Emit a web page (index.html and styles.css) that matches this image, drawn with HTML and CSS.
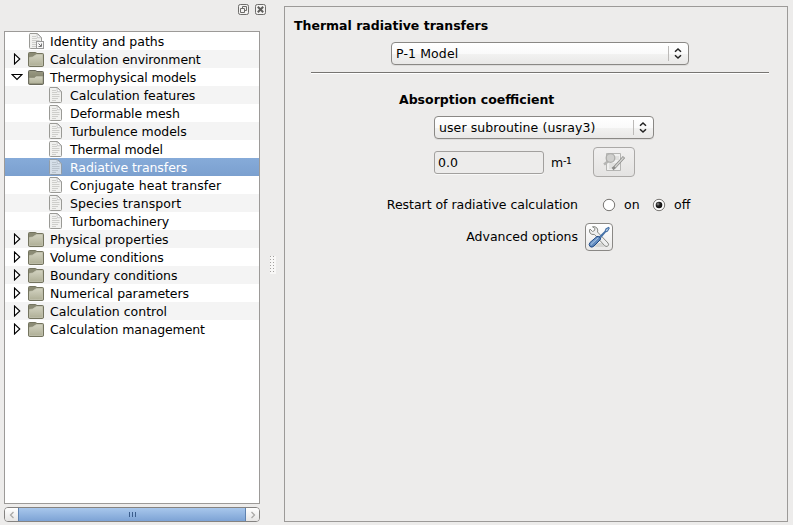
FILE: index.html
```html
<!DOCTYPE html>
<html lang="en">
<head>
<meta charset="utf-8">
<title>Thermal radiative transfers</title>
<link rel="stylesheet" href="styles.css">
</head>
<body>
<svg class="defs" width="0" height="0">
  <defs>
    <linearGradient id="gFolder" x1="0" y1="0" x2="0" y2="1"><stop offset="0" stop-color="#d2d2c0"/><stop offset="1" stop-color="#b0b098"/></linearGradient>
    <linearGradient id="gDark" x1="0" y1="0" x2="0" y2="1"><stop offset="0" stop-color="#9a9a83"/><stop offset="1" stop-color="#75755f"/></linearGradient>
    <linearGradient id="gBlue" x1="0" y1="0" x2="1" y2="1"><stop offset="0" stop-color="#9dbce0"/><stop offset="1" stop-color="#3465a4"/></linearGradient>
    <radialGradient id="gDot" cx=".35" cy=".35" r=".6"><stop offset="0" stop-color="#999"/><stop offset=".5" stop-color="#222"/><stop offset="1" stop-color="#111"/></radialGradient>
    <symbol id="folder" viewBox="0 0 16 16">
      <path d="M.5 14V2.500Q.5 1.500 1.500 1.500H7.500Q8.500 1.500 8.500 2.500H14.500Q15.500 2.500 15.500 3.500V14Q15.500 15.500 14.500 15.500H1.500Q.5 15.500.5 14Z" fill="#8b8b75" stroke="#74745f"/>
      <path d="M1.500 6.500Q5 6.500 7 4.500Q7.500 3.500 9 3.500H14.500V14.500H1.500Z" fill="url(#gFolder)" stroke="#c9c9b6" stroke-width=".7"/>
    </symbol>
    <symbol id="folderopen" viewBox="0 0 16 16">
      <path d="M.5 14V2.500Q.5 1.500 1.500 1.500H7.500Q8.500 1.500 8.500 2.500H14.500Q15.500 2.500 15.500 3.500V14Q15.500 15.500 14.500 15.500H1.500Q.5 15.500.5 14Z" fill="url(#gDark)" stroke="#66665a"/>
      <path d="M1 8.500H6.500L8 7H15V14.800H1Z" fill="url(#gFolder)" stroke="#85856f" stroke-width=".6"/>
    </symbol>
    <symbol id="doc" viewBox="0 0 16 16">
      <path d="M2 .5H9.500L13.500 4.500V14.500Q13.500 15.500 12.500 15.500H2.500Q1.500 15.500 1.500 14.500V1.500Q1.500.5 2.500.5Z" fill="#f1f1ef" stroke="#9a9a96"/>
      <path d="M9 1L9.300 4.700H13.200Z" fill="#fff" stroke="#aaa" stroke-width=".6"/>
      <path d="M4 3.500H8M4 5.500H9M4 7.500H11.500M4 9.500H11.500M4 11.500H10M4 13.500H8" stroke="#cececb"/>
    </symbol>
    <symbol id="link" viewBox="0 0 16 16">
      <use href="#doc" width="16" height="16"/>
      <rect x="8.500" y="8.500" width="7" height="7" fill="#f7f7f7" stroke="#999"/>
      <path d="M10.500 10.500L13 13M13.500 10.500V13.500H10.500" stroke="#777" fill="none"/>
    </symbol>
    <symbol id="updown" viewBox="0 0 8 12"><path d="M1 4.300L4 1.500L7 4.300M1 7.700L4 10.500L7 7.700" fill="none" stroke="#222" stroke-width="1.500"/></symbol>
    <symbol id="closed" viewBox="0 0 10 12"><path d="M2.500 1V11L7.800 6Z" fill="#fff" stroke="#000" stroke-width="1.100"/></symbol>
    <symbol id="opened" viewBox="0 0 12 12"><path d="M1 3.500H11L6 8.500Z" fill="#fff" stroke="#000" stroke-width="1.100"/></symbol>
  </defs>
</svg>
<div class="window">
  <aside class="dock">
    <div class="dockbar">
      <svg width="11" height="11"><rect x=".5" y=".5" width="10" height="10" rx="1.800" fill="#f3f2f1" stroke="#6e6d6b"/><path d="M4.500 4V2.500H8.500V6.500H7M2.500 4.500H6.500V8.500H2.500Z" fill="none" stroke="#6e6d6b"/></svg>
      <svg width="11" height="11"><rect x=".5" y=".5" width="10" height="10" rx="1.800" fill="#f3f2f1" stroke="#6e6d6b"/><path d="M2.800 2.800L8.200 8.200M8.200 2.800L2.800 8.200" stroke="#5e5d5b" stroke-width="2"/></svg>
    </div>
    <ul class="tree">
      <li><svg class="arrow"></svg><svg class="icon"><use href="#link"/></svg><span>Identity and paths</span></li>
      <li><svg class="arrow"><use href="#closed" width="10" height="12"/></svg><svg class="icon"><use href="#folder"/></svg><span class="tight">Calculation environment</span></li>
      <li class="expanded"><svg class="arrow"><use href="#opened" width="12" height="12"/></svg><svg class="icon"><use href="#folderopen"/></svg><span class="tight">Thermophysical models</span></li>
      <li class="child"><svg class="icon"><use href="#doc"/></svg><span>Calculation features</span></li>
      <li class="child"><svg class="icon"><use href="#doc"/></svg><span class="tight">Deformable mesh</span></li>
      <li class="child"><svg class="icon"><use href="#doc"/></svg><span class="snug">Turbulence models</span></li>
      <li class="child"><svg class="icon"><use href="#doc"/></svg><span class="tight">Thermal model</span></li>
      <li class="child selected"><svg class="icon"><use href="#doc"/></svg><span class="snug">Radiative transfers</span></li>
      <li class="child"><svg class="icon"><use href="#doc"/></svg><span class="loose">Conjugate heat transfer</span></li>
      <li class="child"><svg class="icon"><use href="#doc"/></svg><span class="loose">Species transport</span></li>
      <li class="child"><svg class="icon"><use href="#doc"/></svg><span class="tight">Turbomachinery</span></li>
      <li><svg class="arrow"><use href="#closed" width="10" height="12"/></svg><svg class="icon"><use href="#folder"/></svg><span>Physical properties</span></li>
      <li><svg class="arrow"><use href="#closed" width="10" height="12"/></svg><svg class="icon"><use href="#folder"/></svg><span class="snug">Volume conditions</span></li>
      <li><svg class="arrow"><use href="#closed" width="10" height="12"/></svg><svg class="icon"><use href="#folder"/></svg><span class="snug">Boundary conditions</span></li>
      <li><svg class="arrow"><use href="#closed" width="10" height="12"/></svg><svg class="icon"><use href="#folder"/></svg><span class="snug">Numerical parameters</span></li>
      <li><svg class="arrow"><use href="#closed" width="10" height="12"/></svg><svg class="icon"><use href="#folder"/></svg><span>Calculation control</span></li>
      <li><svg class="arrow"><use href="#closed" width="10" height="12"/></svg><svg class="icon"><use href="#folder"/></svg><span class="tight">Calculation management</span></li>
    </ul>
    <div class="scrollbar">
      <div class="step"><svg width="6" height="8"><path d="M4.500 1L1.500 4L4.500 7" fill="none" stroke="#aaa9a7" stroke-width="1.300"/></svg></div>
      <div class="thumb"><i></i><i></i><i></i></div>
      <div class="step"><svg width="6" height="8"><path d="M1.500 1L4.500 4L1.500 7" fill="none" stroke="#aaa9a7" stroke-width="1.300"/></svg></div>
    </div>
  </aside>
  <div class="splitter"><div class="grip"></div></div>
  <main class="panel">
    <h1>Thermal radiative transfers</h1>
    <div class="combo model"><span>P-1 Model</span><svg class="ud"><use href="#updown"/></svg></div>
    <hr>
    <h2>Absorption coefficient</h2>
    <div class="combo coef"><span>user subroutine (usray3)</span><svg class="ud"><use href="#updown"/></svg></div>
    <div class="row value">
      <div class="field">0.0</div>
      <span class="unit">m<span class="sup">-1</span></span>
      <div class="btn wide">
        <svg width="24" height="20" viewBox="0 0 24 20">
          <path d="M4.500 1.500H18.500V18.500H4.500Z" fill="#f0f0ef" stroke="#b5b5b3"/>
          <path d="M7 12H15M7 14H15M7 16H12M13 5H17M13 7H17" stroke="#d2d2d0"/>
          <path d="M6.500 9L2 12.500" stroke="#b5b5b3" stroke-width="2.500"/>
          <circle cx="8.500" cy="6" r="4.300" fill="#cfcfcd" stroke="#adadab" stroke-width="1.300"/>
          <path d="M22 5L12.500 15.500L10.500 17" fill="none" stroke="#8c8c8a" stroke-width="3"/><path d="M21.500 5.500L13 15" stroke="#d4d4d2" stroke-width="1.400"/>
        </svg>
      </div>
    </div>
    <div class="row restart">
      <span class="label">Restart of radiative calculation</span>
      <svg class="radio" width="14" height="14"><circle cx="7" cy="7" r="5.700" fill="#fff" stroke="#777572"/></svg><span class="on">on</span>
      <svg class="radio" width="14" height="14"><circle cx="7" cy="7" r="5.700" fill="#fff" stroke="#777572"/><circle cx="7" cy="7" r="3.300" fill="url(#gDot)"/></svg><span>off</span>
    </div>
    <div class="row advanced">
      <span class="label">Advanced options</span>
      <div class="btn small">
        <svg width="22" height="22" viewBox="0 0 22 22">
          <ellipse cx="12" cy="19" rx="8" ry="2" fill="#d5d5d3"/>
          <path d="M2 3L4.500 5.500L6.500 4.500L7 2.500L4.500.8Q7 0 9 2Q10.300 4 9.500 6L20 17Q21.500 19 19.500 20.300Q18 21 16.500 19.500L6.500 8.500Q3.500 9 2 7Q.8 5 2 3Z" fill="#eee" stroke="#888a85"/>
          <path d="M11 11.500L17 5.500L18 3L20.500 1.500L21.200 2.200L19.500 5L17.500 6L12 12.500Z" fill="#cadcf0" stroke="#4672a8" stroke-width="1.100"/>
          <path d="M9 10.500Q11 10 12 11.500Q13 13 12 14L6 20Q4 22 2 20.500Q.3 18.500 2 16.500Z" fill="url(#gBlue)" stroke="#204a87"/>
          <path d="M10 12L3 18.500" stroke="#a8c5e8"/>
        </svg>
      </div>
    </div>
  </main>
</div>
</body>
</html>
```
FILE: styles.css
```css
* { box-sizing: border-box; }
body { margin: 0; background: #edeceb; color: #000; font: 12.5px/18px "DejaVu Sans", sans-serif; overflow: hidden; }
.defs { position: absolute; }
svg { display: block; flex: none; }
.window { display: flex; width: 793px; height: 525px; }
.dock { width: 260px; padding-left: 4px; }
.dockbar { display: flex; gap: 6px; height: 31px; padding: 4px 0 0 234px; width: 264px; }
.tree { list-style: none; margin: 0; padding: 0; height: 473px; background: #fff; border: 1px solid #9c9a98; }
.tree li { display: flex; align-items: center; height: 18px; padding-left: 7px; white-space: nowrap; }
.tree li:nth-child(even) { background: #f4f4f4; }
.tree li.child { padding-left: 43px; }
.tree li.expanded { padding-left: 6px; }
.tree li.selected { background: linear-gradient(#86abd9, #7ba0cf); color: #fff; }
.selected .icon { opacity: .75; }
.arrow { width: 12px; height: 12px; margin-right: 4px; }
.expanded .arrow { margin-right: 5px; }
.icon { width: 16px; height: 16px; margin-right: 6px; }
.tree span { position: relative; top: 1px; }
.tight { letter-spacing: -.12px; }
.snug { letter-spacing: -.06px; }
.loose { letter-spacing: .08px; }
.scrollbar { display: flex; height: 15px; margin-top: 3px; border: 1px solid #858381; border-radius: 4px; overflow: hidden; background: #fff; }
.step { width: 13px; display: flex; align-items: center; justify-content: center; background: linear-gradient(#fff, #e6e5e4); }
.thumb { flex: 1; display: flex; gap: 2px; align-items: center; justify-content: center; border: solid #5f82af; border-width: 0 1px; background: linear-gradient(#a8c7ec, #7da3d5); }
.thumb i { width: 1px; height: 5px; background: #3b5d8c; }
.splitter { width: 24px; padding: 256px 0 0 10px; }
.grip { width: 6px; height: 18px; background: conic-gradient(from 0deg at 1px 1px, #f8f7f6 0 270deg, #a3a19f 270deg) 0 0 / 3px 3px; }
.panel { width: 504px; height: 516px; margin-top: 6px; border: 1px solid #9c9a98; }
h1, h2 { font-size: 12.5px; line-height: 18px; font-weight: bold; margin: 0; }
h1 { margin: 10px 0 0 9px; }
.combo { display: flex; align-items: center; height: 23px; border: 1px solid #8a8885; border-radius: 4px; background: linear-gradient(#fff 0, #fafafa 50%, #f2f2f1 51%, #e9e8e7 100%); padding-left: 4px; box-shadow: 0 1px #dddcdb; }
.combo span { flex: 1; }
.model span { letter-spacing: .12px; }
.coef span { letter-spacing: .09px; }
.ud { width: 20px; height: 15px; padding: 1px 6px 1px 5px; border-left: 1px solid #bcbab8; }
.model { width: 298px; margin: 7px 0 0 106px; }
.coef { width: 220px; margin: 7px 0 0 149px; }
hr { width: 458px; height: 2px; border: 0; border-top: 1px solid #777572; background: #fff; margin: 7px 0 0 26px; }
h2 { margin: 17px 0 0 114px; }
.row { display: flex; align-items: center; }
.value { height: 30px; margin: 8px 0 0 149px; }
.field { width: 110px; height: 23px; border: 1px solid #a2a09e; border-radius: 3px; padding: 2px 3px; box-shadow: 0 1px #f8f8f7; }
.unit { width: 42px; margin-left: 7px; padding-top: 2px; }
.sup { font-size: 8.5px; position: relative; top: -3px; -webkit-text-stroke: .2px #000; }
.btn { display: flex; align-items: center; justify-content: center; border: 1px solid #8a8885; border-radius: 4px; background: linear-gradient(#fff, #eae9e8); }
.wide { width: 42px; height: 30px; border-color: #aba9a7; background: linear-gradient(#f1f0f0, #e4e3e2); }
.small { width: 28px; height: 28px; margin-left: 7px; }
.restart { height: 20px; margin-top: 18px; }
.label { width: 293px; text-align: right; }
.restart .label { letter-spacing: -.03px; }
.radio { margin-left: 24px; }
.radio + span { margin-left: 8px; }
.on { width: 20px; }
.on + .radio { margin-left: 8px; }
.advanced { height: 28px; margin-top: 8px; }
```
